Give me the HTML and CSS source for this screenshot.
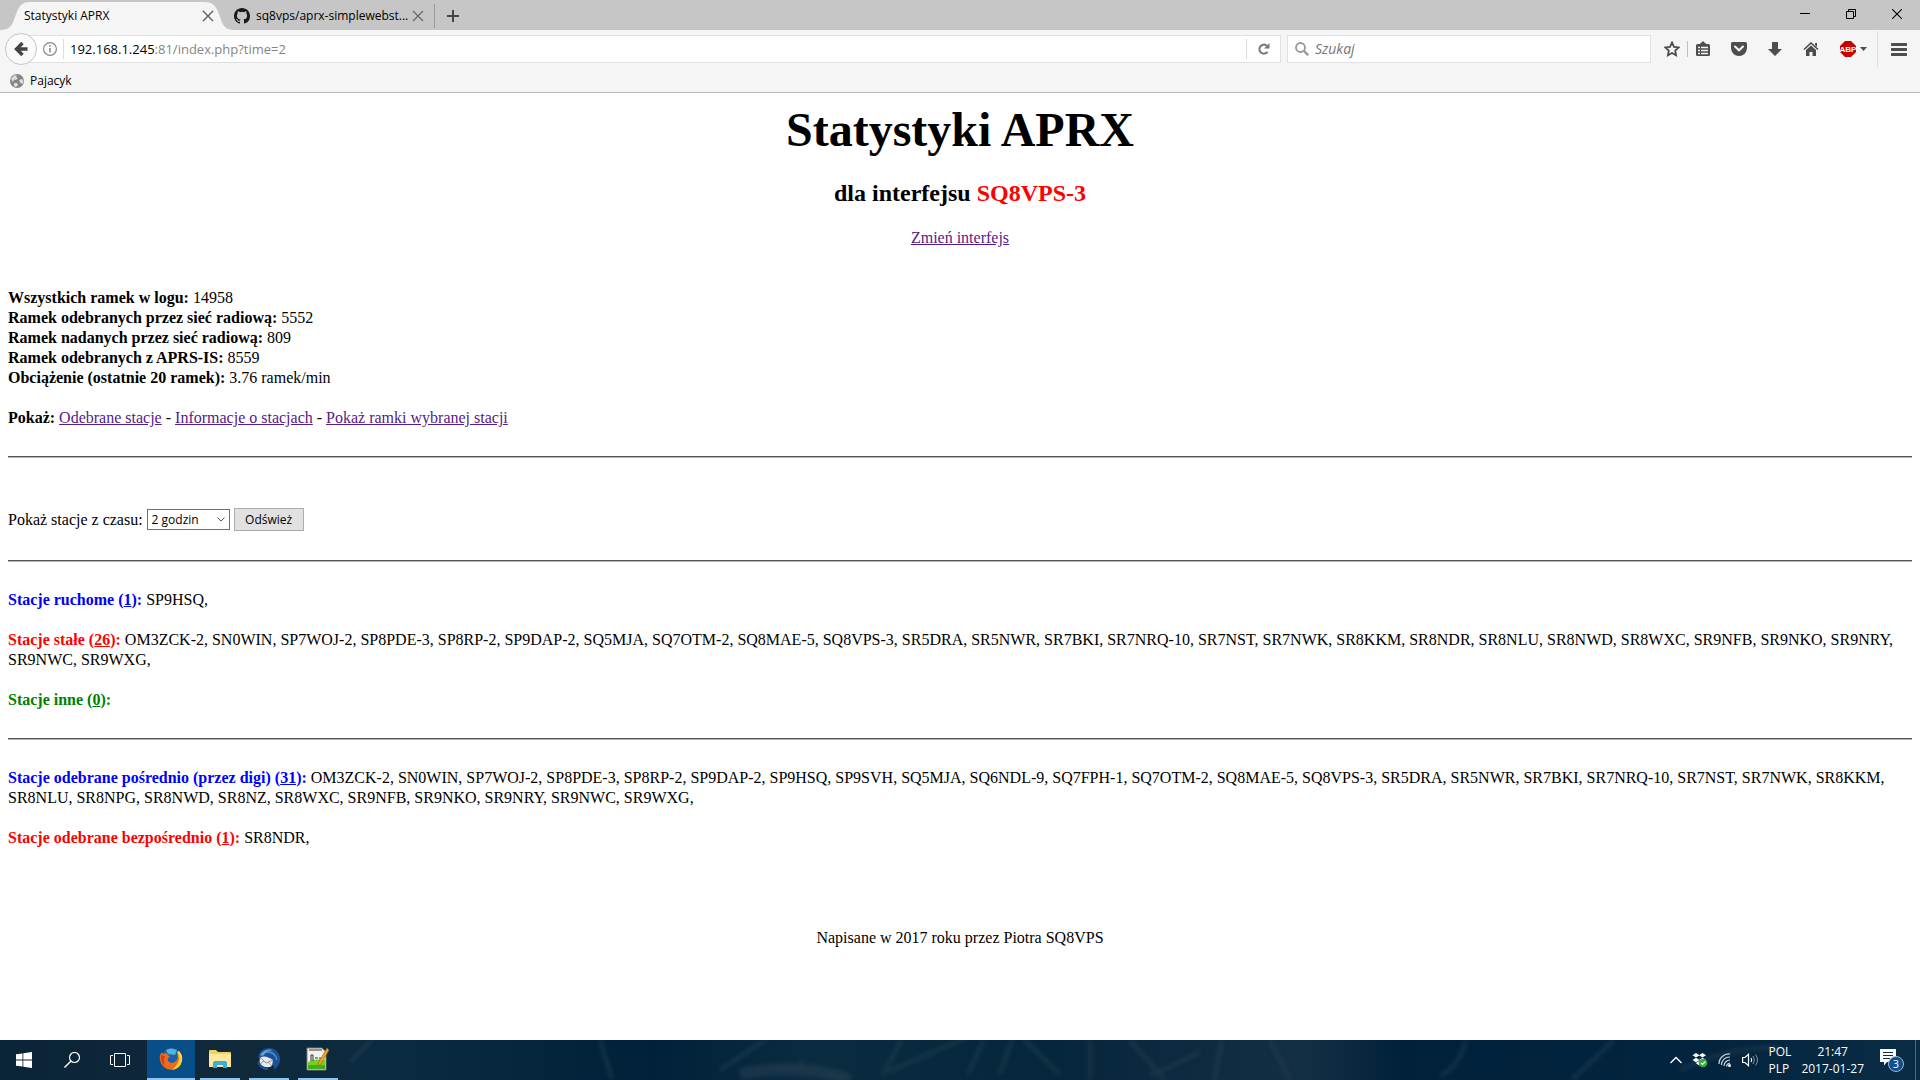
FILE: index.html
```html
<!DOCTYPE html>
<html lang="pl">
<head>
<meta charset="utf-8">
<title>Statystyki APRX</title>
<link rel="stylesheet" href="styles.css">
</head>
<body>
<header class="browser">
  <div class="tabstrip">
    <div class="tab tab-active">
      <svg class="tab-shape" viewBox="0 0 236 28" preserveAspectRatio="none" aria-hidden="true"><path d="M0 28C9 28 12 24 14 18L17 10C20 3 23 0 30 0H206C214 0 217 3 220 10L223 18C225 24 228 28 236 28Z" fill="#f5f5f5"/></svg>
      <span class="tab-title">Statystyki APRX</span>
      <button class="tab-close" aria-label="Zamknij kartę"><svg width="12" height="12" viewBox="0 0 12 12"><path d="M1 1l10 10M11 1L1 11" stroke="#555" stroke-width="1.2"/></svg></button>
    </div>
    <div class="tab tab-second">
      <svg width="16" height="16" viewBox="0 0 16 16" aria-hidden="true"><path fill="#191919" d="M8 0C3.58 0 0 3.58 0 8c0 3.54 2.29 6.53 5.47 7.59.4.07.55-.17.55-.38v-1.49c-2.01.37-2.53-.49-2.69-.94-.09-.23-.48-.94-.82-1.13-.28-.15-.68-.52-.01-.53.63-.01 1.08.58 1.23.82.72 1.21 1.87.87 2.33.66.07-.52.28-.87.51-1.07-1.78-.2-3.64-.89-3.64-3.95 0-.87.31-1.59.82-2.15-.08-.2-.36-1.02.08-2.12 0 0 .67-.21 2.2.82a7.6 7.6 0 0 1 4 0c1.53-1.04 2.2-.82 2.2-.82.44 1.1.16 1.92.08 2.12.51.56.82 1.27.82 2.15 0 3.07-1.87 3.75-3.65 3.95.29.25.54.73.54 1.48v2.19c0 .21.15.46.55.38A8 8 0 0 0 16 8c0-4.42-3.58-8-8-8z"/></svg>
      <span class="tab-title">sq8vps/aprx-simplewebst...</span>
      <button class="tab-close" aria-label="Zamknij kartę"><svg width="12" height="12" viewBox="0 0 12 12"><path d="M1 1l10 10M11 1L1 11" stroke="#666" stroke-width="1.2"/></svg></button>
    </div>
    <button class="new-tab" aria-label="Nowa karta"><svg width="12" height="12" viewBox="0 0 12 12"><path d="M6 0v12M0 6h12" stroke="#444" stroke-width="2"/></svg></button>
    <div class="window-controls">
      <button aria-label="Minimalizuj"><svg width="10" height="10" viewBox="0 0 10 10"><path d="M0 4.5h10" stroke="#000"/></svg></button>
      <button aria-label="Przywróć"><svg width="10" height="10" viewBox="0 0 10 10"><path d="M.5 2.5h7v7h-7zM2.500 2.500v-2h7v7h-2" fill="none" stroke="#000"/></svg></button>
      <button aria-label="Zamknij"><svg width="10" height="10" viewBox="0 0 10 10"><path d="M0 0l10 10M10 0L0 10" stroke="#000" stroke-width="1.1"/></svg></button>
    </div>
  </div>
  <div class="navbar">
    <button class="back" aria-label="Wstecz"><svg width="14" height="14" viewBox="0 0 14 14"><path d="M13.500 7H3M8.500 1L2.500 7L8.500 13" fill="none" stroke="#444" stroke-width="3.400"/></svg></button>
    <div class="urlbar">
      <svg class="info" width="14" height="14" viewBox="0 0 14 14" aria-hidden="true"><circle cx="7" cy="7" r="6.400" fill="none" stroke="#888" stroke-width="1.200"/><path d="M7 6v4.500M7 3.200v1.600" stroke="#888" stroke-width="1.600"/></svg>
      <div class="url" role="textbox" aria-label="Adres">192.168.1.245<span>:81/index.php?time=2</span></div>
      <button class="reload" aria-label="Odśwież stronę"><svg width="12" height="12" viewBox="0 0 12 12"><path d="M9.500 8.800A4.500 4.500 0 1 1 8.800 2.700" fill="none" stroke="#777" stroke-width="2"/><path d="M11.500 0v5.500H6z" fill="#777"/></svg></button>
    </div>
    <div class="searchbar">
      <svg width="14" height="14" viewBox="0 0 14 14" aria-hidden="true"><circle cx="5.500" cy="5.500" r="4.500" fill="none" stroke="#999" stroke-width="1.800"/><path d="M8.500 8.500l4.700 4.700" stroke="#999" stroke-width="2.400"/></svg>
      <input type="text" placeholder="Szukaj" aria-label="Szukaj">
    </div>
    <div class="tools">
      <button class="star" aria-label="Dodaj zakładkę"><svg width="16" height="16" viewBox="0 0 16 16"><path d="M8 1.500l2 4.300 4.700.6-3.500 3.200.9 4.700L8 12l-4.100 2.300.9-4.700L1.300 6.400 6 5.800z" fill="none" stroke="#4d4d4d" stroke-width="1.800"/></svg></button>
      <i class="sep"></i>
      <button aria-label="Zakładki"><svg width="14" height="16" viewBox="0 0 14 16"><path d="M1.500 3h11A1.500 1.500 0 0 1 14 4.500v9a1.500 1.500 0 0 1-1.500 1.500h-11A1.500 1.500 0 0 1 0 13.500v-9A1.500 1.500 0 0 1 1.500 3zM4 3l1-1.500h1V.5h2v1h1L10 3z" fill="#4d4d4d"/><path d="M2 6.500h2M5 6.500h7M2 9.500h2M5 9.500h7M2 12.500h2M5 12.500h7" stroke="#f5f5f5" stroke-width="1.300"/></svg></button>
      <button aria-label="Pocket"><svg width="16" height="14" viewBox="0 0 16 14"><path d="M1.500 0h13Q16 0 16 1.500V6A8 8 0 0 1 0 6V1.500Q0 0 1.500 0z" fill="#4d4d4d"/><path d="M4 4.500l4 3.800 4-3.800" fill="none" stroke="#f5f5f5" stroke-width="2" stroke-linecap="round"/></svg></button>
      <button aria-label="Pobieranie"><svg width="14" height="14" viewBox="0 0 14 14"><path d="M4 0h6v7h4l-7 7-7-7h4z" fill="#4d4d4d"/></svg></button>
      <button aria-label="Strona startowa"><svg width="16" height="14" viewBox="0 0 16 14"><path d="M1 7.500L8 1l7 6.500" fill="none" stroke="#4d4d4d" stroke-width="1.600"/><path d="M12 1h2v4l-2-2zM8 3.500l5 4.500v6H9.500v-4h-3v4H3V8z" fill="#4d4d4d"/></svg></button>
      <button class="abp" aria-label="Adblock Plus"><svg width="27" height="16" viewBox="0 0 27 16"><path d="M5 0h6l5 5v6l-5 5H5l-5-5V5z" fill="#c90000"/><text x="8" y="11" text-anchor="middle" font-size="8" font-weight="700" font-family="Liberation Sans, sans-serif" fill="#fff">ABP</text><path d="M20 6h7l-3.500 4z" fill="#4d4d4d"/></svg></button>
      <button class="menu" aria-label="Menu"><svg width="16" height="13" viewBox="0 0 16 13"><path d="M1 1.500h14M1 6.500h14M1 11.500h14" stroke="#4d4d4d" stroke-width="3" stroke-linecap="round"/></svg></button>
    </div>
  </div>
  <nav class="bookmarks">
    <a href="#"><svg width="14" height="14" viewBox="0 0 14 14" aria-hidden="true"><circle cx="7" cy="7" r="7" fill="#858585"/><path d="M1 5L4 1.500 7 1 6 3 8 4 6 6 4 5.500 3 8zM9 6l3-1 1.500 2-1 3-2-1zM4 9l3 0 1 2-2 2-2-1z" fill="#ddd"/></svg>Pajacyk</a>
  </nav>
</header>

<main class="page">
  <div class="heading">
    <h1>Statystyki APRX</h1>
    <h2>dla interfejsu <span class="red">SQ8VPS-3</span></h2>
    <a href="#">Zmień interfejs</a>
  </div>
  <div class="totals">
    <b>Wszystkich ramek w logu:</b> 14958<br>
    <b>Ramek odebranych przez sieć radiową:</b> 5552<br>
    <b>Ramek nadanych przez sieć radiową:</b> 809<br>
    <b>Ramek odebranych z APRS-IS:</b> 8559<br>
    <b>Obciążenie (ostatnie 20 ramek):</b> 3.76 ramek/min
  </div>
  <div class="views"><b>Pokaż:</b> <a href="#">Odebrane stacje</a> - <a href="#">Informacje o stacjach</a> - <a href="#">Pokaż ramki wybranej stacji</a></div>
  <hr>
  <form class="filter">
    <label for="time">Pokaż stacje z czasu:</label>
    <span class="select"><select id="time"><option>2 godzin</option></select><svg width="8" height="5" viewBox="0 0 8 5" aria-hidden="true"><path d="M.5 .5L4 4 7.500 .5" fill="none" stroke="#555"/></svg></span>
    <button type="button">Odśwież</button>
  </form>
  <hr>
  <section class="stations">
    <p><b class="blue">Stacje ruchome (<u>1</u>):</b> SP9HSQ,</p>
    <p><b class="red">Stacje stałe (<u>26</u>):</b> OM3ZCK-2, SN0WIN, SP7WOJ-2, SP8PDE-3, SP8RP-2, SP9DAP-2, SQ5MJA, SQ7OTM-2, SQ8MAE-5, SQ8VPS-3, SR5DRA, SR5NWR, SR7BKI, SR7NRQ-10, SR7NST, SR7NWK, SR8KKM, SR8NDR, SR8NLU, SR8NWD, SR8WXC, SR9NFB, SR9NKO, SR9NRY, SR9NWC, SR9WXG,</p>
    <p><b class="green">Stacje inne (<u>0</u>):</b></p>
  </section>
  <hr>
  <section class="stations">
    <p><b class="blue">Stacje odebrane pośrednio (przez digi) (<u>31</u>):</b> OM3ZCK-2, SN0WIN, SP7WOJ-2, SP8PDE-3, SP8RP-2, SP9DAP-2, SP9HSQ, SP9SVH, SQ5MJA, SQ6NDL-9, SQ7FPH-1, SQ7OTM-2, SQ8MAE-5, SQ8VPS-3, SR5DRA, SR5NWR, SR7BKI, SR7NRQ-10, SR7NST, SR7NWK, SR8KKM, SR8NLU, SR8NPG, SR8NWD, SR8NZ, SR8WXC, SR9NFB, SR9NKO, SR9NRY, SR9NWC, SR9WXG,</p>
    <p><b class="red">Stacje odebrane bezpośrednio (<u>1</u>):</b> SR8NDR,</p>
  </section>
  <footer>Napisane w 2017 roku przez Piotra SQ8VPS</footer>
</main>

<div class="taskbar">
  <svg class="wallpaper" viewBox="0 0 1920 40" preserveAspectRatio="none" aria-hidden="true">
    <defs>
      <linearGradient id="night"><stop offset="0" stop-color="#0a2437"/><stop offset=".12" stop-color="#10293b"/><stop offset=".2" stop-color="#0a2b40"/><stop offset=".34" stop-color="#01213a"/><stop offset=".42" stop-color="#0b2b40"/><stop offset=".55" stop-color="#06263c"/><stop offset=".68" stop-color="#132f43"/><stop offset=".73" stop-color="#01213b"/><stop offset=".9" stop-color="#04253f"/><stop offset="1" stop-color="#0a2c45"/></linearGradient>
      <filter id="soft" x="-10%" y="-50%" width="120%" height="200%"><feGaussianBlur stdDeviation="2"/></filter>
    </defs>
    <rect width="1920" height="40" fill="url(#night)"/>
    <g fill="none" stroke="#2a4353" stroke-width="4" opacity=".5" filter="url(#soft)">
      <path d="M350 22L372 0M612 40L600 0M720 30L765 0M806 34L800 20M882 36L902 0M888 32L965 -2M968 34L984 0M1000 34L1012 0M1024 0L1060 34M1090 0V40M1130 0L1165 40M1150 36L1200 12M1222 0L1214 40M1270 0L1290 40M1440 36Q1460 26 1466 0M1572 40L1614 0M1680 30Q1730 6 1780 8"/>
      <path d="M740 34Q800 22 850 40" stroke-width="12"/>
    </g>
  </svg>
  <div class="launchers">
    <button aria-label="Start"><svg width="16" height="16" viewBox="0 0 16 16"><path d="M0 2.300L6.500 1.400V7.600H0zM7.300 1.300L16 0v7.600H7.300zM0 8.400h6.500v6.200L0 13.700zM7.300 8.400H16V16l-8.700-1.300z" fill="#fff"/></svg></button>
    <button aria-label="Wyszukaj"><svg width="16" height="16" viewBox="0 0 16 16"><circle cx="10.500" cy="5.500" r="5" fill="none" stroke="#fff" stroke-width="1.200"/><path d="M7 9L.5 15.500" stroke="#fff" stroke-width="1.400"/></svg></button>
    <button aria-label="Widok zadań"><svg width="20" height="14" viewBox="0 0 20 14"><path d="M4.500 .5h11v13h-11zM3 2.500H.5v9H3M17 2.500h2.500v9H17" fill="none" stroke="#fff"/></svg></button>
    <button class="app app-active" aria-label="Firefox"><svg width="24" height="24" viewBox="0 0 24 24"><circle cx="12.500" cy="10.500" r="9.500" fill="#1f5fa8"/><path d="M7 3Q12 0 18 3L16 8 9 7z" fill="#4fb4de"/><path d="M20 4Q24 8 23 14A11.200 11.200 0 0 1 1 13Q0 8 3 5L4 7Q8 5 9 8L11 10Q8 11 9 14 13 18 17 14 20 11 18 6L20 9Z" fill="#ee6b1a"/><path d="M20 4Q24 8 23 14 21 22 13 23 19 18 20 12 20 8 18 5z" fill="#ffd43a"/><path d="M2 8Q1 15 6 19 4 14 6 9z" fill="#d93a20"/></svg></button>
    <button class="app" aria-label="Eksplorator plików"><svg width="22" height="20" viewBox="0 0 22 20"><path d="M0 2Q0 1 1 1H7L9 3H21Q22 3 22 4V18H0z" fill="#f4cf63"/><path d="M0 5h22v13H0z" fill="#ffe79b"/><path d="M4 19v-5q0-2 2-2h10q2 0 2 2v5h-4v-3H8v3z" fill="#35aee2"/></svg></button>
    <button class="app" aria-label="Thunderbird"><svg width="24" height="24" viewBox="0 0 24 24"><path d="M1 10Q3 1 13 1 21 2 23 10 24 18 17 23 18 20 16 18L4 14z" fill="#1b4f96"/><path d="M3 8Q8 1 16 3 9 4 6 9z" fill="#5ea5dc"/><path d="M9 5Q18 4 20 13" fill="none" stroke="#4b8fd0" stroke-width="1.500"/><path d="M4 10Q9 8 16 13L15 19Q9 22 4 18 1 14 4 10z" fill="#e8e9ec"/><path d="M4 11l5 5 7-3M3 17l4-3M15 19l-4-4" fill="none" stroke="#8a939d"/><path d="M1 15Q4 22 11 22" fill="none" stroke="#1b4f96" stroke-width="2"/></svg></button>
    <button class="app" aria-label="Notepad++"><svg width="24" height="24" viewBox="0 0 24 24"><path d="M1 1h15l4 4v18H1z" fill="#f2f2ed" stroke="#777"/><path d="M2 15Q10 11 19 13V22H2z" fill="#72d21f"/><path d="M2 18h17v4H2z" fill="#3fae18"/><path d="M5 14V8h2v6M9 11h3M13 11h2M3 3h13" stroke="#333" fill="none"/><path d="M21 1l2 2L15 17l-3 2 .5-3.500z" fill="#f2a31f" stroke="#9b5a15" stroke-width=".6"/></svg></button>
  </div>
  <div class="tray">
    <svg width="12" height="8" viewBox="0 0 12 8" aria-hidden="true"><path d="M.5 7L6 1.500 11.500 7" fill="none" stroke="#fff" stroke-width="1.300"/></svg>
    <svg width="16" height="16" viewBox="0 0 16 16" aria-hidden="true"><path d="M4 1l3.500 2.300L4 5.500.5 3.300zM10.500 1L14 3.300l-3.500 2.200L7 3.300zM4 5.800L7.500 8 4 10.200.5 8zM10.500 5.800L14 8l-3.500 2.200L7 8zM7.200 9l3 2-3 2.500-3.500-2.500z" fill="#fff"/><circle cx="11" cy="11" r="4.300" fill="#35ad3b"/><path d="M9 11l1.500 1.500 3-3" fill="none" stroke="#fff" stroke-width="1.200"/></svg>
    <svg width="14" height="14" viewBox="0 0 14 14" aria-hidden="true"><g fill="none" stroke="#cdd5da" stroke-width="1.200"><path d="M1 11A10 10 0 0 1 12 1M3.500 12A8 8 0 0 1 12 4M6 13A6 6 0 0 1 12 7M8.500 13.500A4 4 0 0 1 12 10"/></g><circle cx="11.500" cy="12.500" r="1.500" fill="#fff"/></svg>
    <svg width="17" height="14" viewBox="0 0 17 14" aria-hidden="true"><path d="M.6 4.500H3L6.500 1.300v11.400L3 9.500H.6z" fill="none" stroke="#fff" stroke-width="1.200"/><path d="M9 5q1.500 2 0 4" fill="none" stroke="#fff" stroke-width="1.200"/><path d="M11 3q3 4 0 8M13.500 1.500q4 5.500 0 11" fill="none" stroke="#8494a0"/></svg>
    <div class="lang"><span>POL</span><span>PLP</span></div>
    <div class="clock"><span>21:47</span><span>2017-01-27</span></div>
    <button class="notice" aria-label="Centrum akcji"><svg width="24" height="24" viewBox="0 0 24 24"><path d="M0 1h16v13H7l-3 3.500V14H0z" fill="#fff"/><path d="M3 4.500h10M3 7.500h10M3 10.500h7" stroke="#0a2c45"/><circle cx="16" cy="16" r="7.500" fill="#0f4f8c" stroke="#9cb9d2"/><text x="16" y="20" text-anchor="middle" font-size="11" font-family="Open Sans, sans-serif" fill="#fff">3</text></svg></button>
  </div>
</div>
</body>
</html>
```
FILE: styles.css
```css
* { box-sizing: border-box; }
body {
  margin: 0;
  min-height: 100vh;
  display: flex;
  flex-direction: column;
  background: #fff;
  color: #000;
  font: 16px/20px "Liberation Serif", serif;
}
svg { display: block; flex: none; }
button { padding: 0; border: 0; background: none; color: inherit; font: inherit; }

.browser { font: 12px/16px "Open Sans", "Noto Sans", sans-serif; background: #f5f5f5; border-bottom: 1px solid #bcbcbc; }
.tabstrip { display: flex; align-items: flex-end; height: 30px; background: #c6c6c6; }
.tab { display: flex; align-items: center; height: 28px; }
.tab-title { flex: 1; white-space: nowrap; }
.tab-active { position: relative; width: 234px; padding: 0 20px 0 24px; }
.tab-active > * { position: relative; }
.tab-active .tab-shape { position: absolute; inset: 0; width: 100%; height: 100%; }
.tab-second { width: 201px; height: 24px; margin-bottom: 2px; padding-right: 10px; border-right: 1px solid #999; }
.tab-second .tab-title { margin-left: 6px; }
.new-tab { margin: 0 12px 8px; }
.window-controls { display: flex; margin-left: auto; align-self: flex-start; }
.window-controls button { display: grid; place-items: center; width: 46px; height: 28px; }

.navbar { display: flex; align-items: center; height: 38px; }
.back { display: grid; place-items: center; width: 32px; height: 32px; margin-left: 5px; border: 1px solid #c5c5c5; border-radius: 50%; background: #fafafa; z-index: 1; }
.urlbar { display: flex; align-items: center; flex: 1; height: 28px; margin-left: -8px; border: 1px solid #e1e1e1; background: #fff; }
.info { margin-left: 13px; }
.url { flex: 1; margin-left: 6px; padding-left: 6px; border-left: 1px solid #ddd; font-size: 13px; line-height: 20px; }
.url span { color: #858585; }
.reload { display: grid; place-items: center; width: 34px; height: 20px; border-left: 1px solid #ddd; }
.searchbar { display: flex; align-items: center; gap: 6px; width: 364px; height: 28px; margin-left: 6px; padding: 0 7px; border: 1px solid #e1e1e1; background: #fff; }
.searchbar input { flex: 1; min-width: 0; padding: 0; border: 0; outline: 0; background: none; font: italic 14px/20px "Open Sans", sans-serif; }
.searchbar input::placeholder { color: #757575; opacity: 1; }
.tools { display: flex; align-items: center; }
.tools button { display: grid; place-items: center; width: 36px; height: 36px; }
.tools .star { width: 30px; margin-left: 6px; }
.tools .sep { width: 1px; height: 16px; margin-right: -3px; background: #c0c0c0; }
.tools .abp { width: 48px; }
.tools .menu { width: 43px; border-left: 1px solid #ddd; }
.bookmarks { height: 24px; padding: 5px 10px; }
.bookmarks a { display: flex; align-items: center; gap: 6px; height: 16px; color: #000; text-decoration: none; }

.page { flex: 1; padding: 0 8px; }
.page a { color: #551a8b; }
.heading { text-align: center; }
h1 { margin: 0; padding-top: 9px; font-size: 48px; line-height: 56px; }
h2 { margin: 21px 0; font-size: 24px; line-height: 28px; }
.totals { margin-top: 40px; }
.views { margin: 20px 0 28px; }
hr { width: 100%; height: 2px; margin: 0; border: 0; border-top: 1px solid #555; border-bottom: 1px solid #b5b5b5; }
.filter { display: flex; align-items: center; gap: 4px; padding: 50px 0 29px; }
.select { display: flex; align-items: center; }
.select select { appearance: none; width: 83px; height: 21px; padding: 0 4px; border: 1px solid #707070; border-radius: 0; background: #fff; color: #000; font: 12px/16px "Open Sans", sans-serif; }
.select svg { margin-left: -13px; margin-right: 5px; pointer-events: none; }
.filter button { width: 70px; height: 23px; border: 1px solid #adadad; background: #e1e1e1; font: 12px/16px "Open Sans", sans-serif; }
.stations { padding: 28px 0; }
.stations p { margin: 0 0 20px; }
.stations p:last-child { margin: 0; }
.blue { color: #00f; }
.red { color: #f00; }
.green { color: #008000; }
footer { margin-top: 52px; text-align: center; }

.taskbar { position: relative; display: flex; justify-content: space-between; height: 40px; color: #fff; font: 12px/16px "Open Sans", "Noto Sans", sans-serif; background: #06263c; }
.wallpaper { position: absolute; inset: 0; width: 100%; height: 100%; }
.launchers, .tray { position: relative; display: flex; align-items: center; }
.launchers button { display: grid; place-items: center; width: 48px; height: 40px; }
.launchers .app { width: 40px; margin-left: 9px; border-bottom: 2px solid #8fc4ee; }
.launchers .app-active { width: 48px; margin-left: 3px; background: #084f89; }
.launchers .app-active + .app { margin-left: 5px; }
.tray { gap: 10px; }
.lang, .clock { display: flex; flex-direction: column; line-height: 17px; }
.clock { align-items: center; }
.notice { height: 40px; margin-right: 4px; padding: 0 11px 0 6px; border-right: 1px solid #506879; }
```
